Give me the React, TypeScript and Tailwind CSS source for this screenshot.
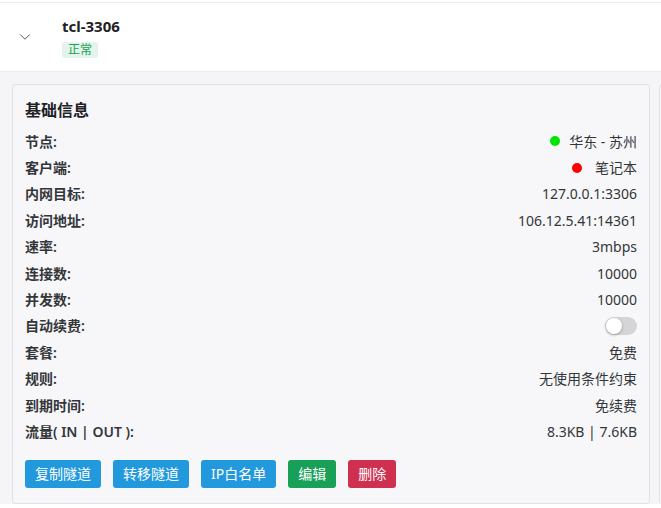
import { ChevronDown } from "lucide-react";

const ROWS: { label: string; value: React.ReactNode }[] = [
  {
    label: "节点:",
    value: (
      <span className="flex items-center gap-[9px]">
        <span className="h-[10px] w-[10px] rounded-full bg-[#00e600]" />
        华东 - 苏州
      </span>
    ),
  },
  {
    label: "客户端:",
    value: (
      <span className="flex items-center gap-[13px]">
        <span className="h-[10px] w-[10px] rounded-full bg-[#ff0000]" />
        笔记本
      </span>
    ),
  },
  { label: "内网目标:", value: "127.0.0.1:3306" },
  { label: "访问地址:", value: "106.12.5.41:14361" },
  { label: "速率:", value: "3mbps" },
  { label: "连接数:", value: "10000" },
  { label: "并发数:", value: "10000" },
  {
    label: "自动续费:",
    value: (
      <span className="relative flex h-[18px] w-[32px] items-center rounded-full bg-[#d5d5d8]">
        <span className="absolute left-[1px] h-[16px] w-[16px] rounded-full bg-white shadow-[0_1px_3px_rgba(0,0,0,0.3)]" />
      </span>
    ),
  },
  { label: "套餐:", value: "免费" },
  { label: "规则:", value: "无使用条件约束" },
  { label: "到期时间:", value: "免续费" },
  { label: "流量( IN | OUT ):", value: "8.3KB | 7.6KB" },
];

const BUTTONS = [
  { text: "复制隧道", cls: "bg-[#2299dd]" },
  { text: "转移隧道", cls: "bg-[#2299dd]" },
  { text: "IP白名单", cls: "bg-[#2299dd]" },
  { text: "编辑", cls: "bg-[#18a058]" },
  { text: "删除", cls: "bg-[#d03050]" },
];

export default function App() {
  return (
    <div
      className="h-[508px] w-[661px] overflow-hidden bg-white text-[#333639]"
      style={{ fontFamily: '"Noto Sans", "Noto Sans CJK SC", sans-serif' }}
    >
      <div className="mt-[2px] border-t border-b border-[#ebebef] bg-white">
        <div className="flex h-[68px] items-center pl-[16px]">
          <ChevronDown size={18} strokeWidth={1.3} className="-mt-[1px] text-[#555]" />
          <div className="ml-[28px] flex flex-col gap-[7px]">
            <div className="text-[15px] font-bold leading-[18px] text-[#1f2225]">tcl-3306</div>
            <span className="w-fit rounded-[3px] bg-[#e3f4ea] px-[6px] text-[12px] leading-[16px] text-[#18a058]">
              正常
            </span>
          </div>
        </div>
      </div>
      <div className="flex gap-[9px] bg-[#f5f5f7] pl-[12px] pt-[12px]">
        <div className="w-[638px] shrink-0 rounded-[3px] border border-[#e0e0e6] bg-[#f7f7fa] px-[12px] pb-[11px] pt-[14px]">
          <div className="text-[16px] font-semibold leading-[22px] text-[#1f2225]">基础信息</div>
          <div className="mt-[7px] flex flex-col">
            {ROWS.map((r) => (
              <div key={r.label} className="flex h-[26.4px] items-center justify-between text-[14px]">
                <span className="font-semibold">{r.label}</span>
                <span>{r.value}</span>
              </div>
            ))}
          </div>
          <div className="mt-[15px] flex gap-[12px]">
            {BUTTONS.map((b) => (
              <button
                key={b.text}
                className={`h-[28px] rounded-[3px] px-[10px] text-[14px] text-white ${b.cls}`}
              >
                {b.text}
              </button>
            ))}
          </div>
        </div>
        <div className="h-[420px] w-[40px] shrink-0 rounded-[3px] border border-[#e0e0e6] bg-[#f7f7fa]" />
      </div>
    </div>
  );
}
